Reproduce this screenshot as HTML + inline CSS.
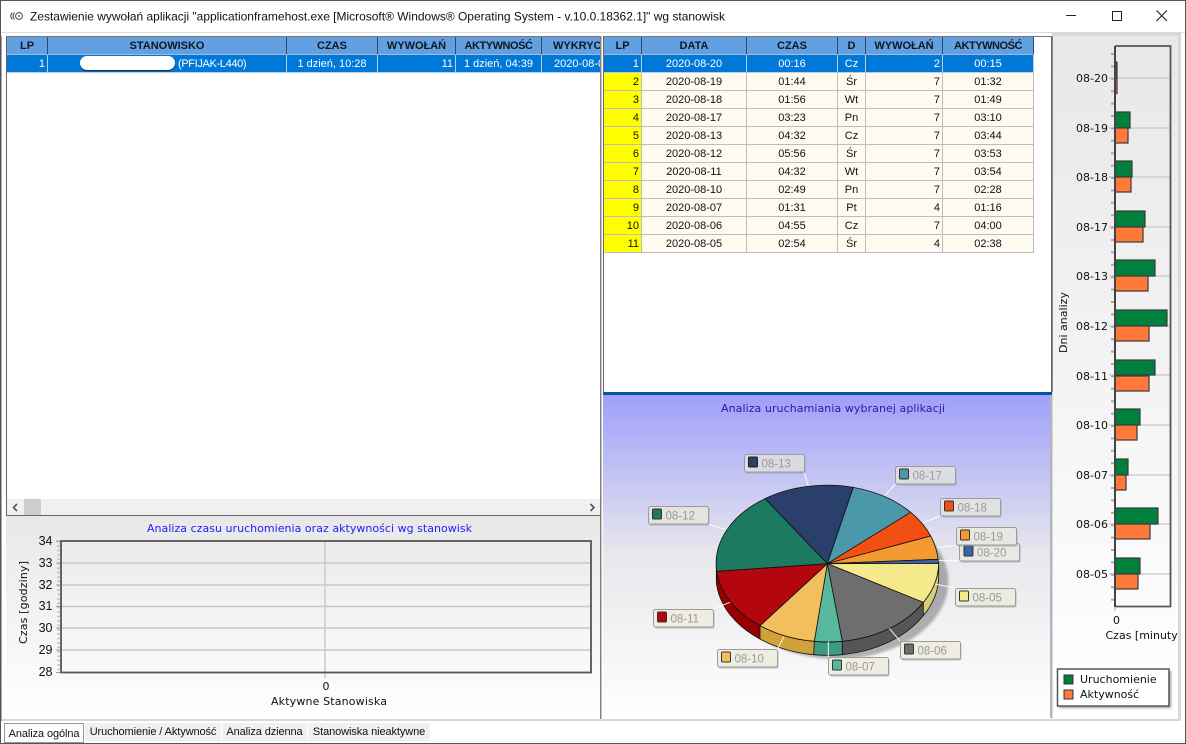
<!DOCTYPE html>
<html><head><meta charset="utf-8"><title>Zestawienie</title>
<style>
html,body{margin:0;padding:0;width:1186px;height:744px;overflow:hidden;background:#fff;font-family:"Liberation Sans",sans-serif}
svg.bg{position:absolute;left:0;top:0}
.t{position:absolute;overflow:hidden;background:#fff}
table{border-collapse:separate;border-spacing:0;table-layout:fixed;font:11px "Liberation Sans",sans-serif;color:#111}
td,th{padding:0 2px;box-sizing:border-box;border-right:1px solid #bdbdbd;border-bottom:1px solid #bdbdbd;text-align:center;white-space:nowrap;overflow:hidden;line-height:16px}
th{height:18px;background:#63a0e2;font-weight:bold;border-right:1px solid #2f4a6a;border-bottom:1px solid #9dbce0;color:#101820}
th.a{letter-spacing:-.45px}
td{height:18px;background:#fefaf0}
tr.s td{background:#0078d7;color:#fff;border-color:#b8cfe8}
td.y{background:#ffff00}
td.r{text-align:right}
.tab{position:absolute;font:11px "Liberation Sans",sans-serif;letter-spacing:-.1px;background:#f0f0f0;height:18px;line-height:18px;text-align:center;top:723px;color:#111;white-space:nowrap}
</style></head><body>
<svg class="bg" width="1186" height="744" viewBox="0 0 1186 744" xmlns="http://www.w3.org/2000/svg" font-family="'DejaVu Sans',sans-serif">
<defs>
<linearGradient id="g1" x1="0" y1="0" x2="0" y2="1"><stop offset="0" stop-color="#e8e8e8"/><stop offset="1" stop-color="#ffffff"/></linearGradient>
<linearGradient id="g2" x1="0" y1="0" x2="0" y2="1"><stop offset="0" stop-color="#9f9ffb"/><stop offset=".5" stop-color="#e8e8ec"/><stop offset="1" stop-color="#ffffff"/></linearGradient>
<filter id="bl" x="-20%" y="-20%" width="140%" height="140%"><feGaussianBlur stdDeviation="4"/></filter>
<filter id="sm" x="-20%" y="-20%" width="140%" height="140%"><feGaussianBlur stdDeviation="1.2"/></filter>
</defs>
<rect width="1186" height="744" fill="#fff"/>
<rect x="0" y="0" width="1186" height="1" fill="#555"/>
<rect x="0" y="0" width="1" height="744" fill="#555"/>
<rect x="1185" y="0" width="1" height="744" fill="#555"/>
<rect x="0" y="743" width="1186" height="1" fill="#555"/>
<rect x="1" y="32" width="1184" height="1" fill="#dcdcdc"/>
<rect x="1" y="719" width="1180" height="2" fill="#d8d8d8"/>
<rect x="1" y="36" width="1" height="685" fill="#a8a8a8"/>
<!-- app icon -->
<g fill="none" stroke="#555" stroke-width="1.1"><circle cx="19" cy="16" r="3.4"/><path d="M14.5 12.5 Q11.5 16 14.5 19.5M12.3 12.5 Q9.3 16 12.3 19.5"/></g>
<circle cx="19" cy="16" r="1" fill="#c33"/>
<text x="30" y="20.5" font-family="'Liberation Sans',sans-serif" font-size="12" fill="#111" textLength="695" lengthAdjust="spacingAndGlyphs">Zestawienie wywołań aplikacji "applicationframehost.exe [Microsoft® Windows® Operating System - v.10.0.18362.1]" wg stanowisk</text>
<!-- window buttons -->
<rect x="1066" y="15" width="10" height="1" fill="#222"/>
<rect x="1112.5" y="11.5" width="9" height="9" fill="none" stroke="#222"/>
<path d="M1156.5 10.5 L1167 21M1167 10.5 L1156.5 21" stroke="#222" stroke-width="1.1" fill="none"/>

<!-- panel frames -->
<rect x="6" y="36" width="1" height="480" fill="#666"/>
<rect x="6" y="36" width="594" height="1" fill="#777"/>
<rect x="600" y="36" width="1" height="683" fill="#808080"/>
<rect x="601" y="36" width="1" height="683" fill="#c4c4c4"/>
<rect x="603" y="36" width="1" height="356" fill="#666"/>
<rect x="1051" y="36" width="1.5" height="356" fill="#666"/>
<rect x="603" y="36" width="449" height="1" fill="#777"/>

<!-- scrollbar -->
<rect x="7" y="499" width="593" height="16" fill="#f0f0f0"/>
<rect x="24" y="499" width="17" height="16" fill="#cdcdcd"/>
<path d="M17 504 L13.5 507.5 L17 511M590.5 504 L594 507.5 L590.5 511" fill="none" stroke="#555" stroke-width="1.6"/>
<rect x="6" y="515" width="595" height="1" fill="#666"/>

<!-- lower-left chart -->
<rect x="6" y="516" width="594" height="203" fill="url(#g1)"/>
<text x="147" y="532" font-size="11" fill="#2020ff" textLength="325">Analiza czasu uruchomienia oraz aktywności wg stanowisk</text>
<g stroke="#c8c8c8" stroke-width="1.4"><path d="M61 563H591M61 585H591M61 606.5H591M61 628H591M61 650H591M325 541V678"/></g>
<rect x="61" y="541" width="530" height="131.5" fill="none" stroke="#555" stroke-width="1.8"/>
<line x1="58.5" y1="541" x2="58.5" y2="673" stroke="#bbb" stroke-width="2.5" stroke-dasharray="1.5 2.9"/>
<path d="M56 541H60M56 563H60M56 585H60M56 606.5H60M56 628H60M56 650H60M56 672.5H60" stroke="#999" stroke-width="1"/>
<g font-family="'Liberation Sans',sans-serif" font-size="12.5" fill="#111" text-anchor="end"><text x="52.5" y="545">34</text><text x="52.5" y="567">33</text><text x="52.5" y="589">32</text><text x="52.5" y="610">31</text><text x="52.5" y="632">30</text><text x="52.5" y="654">29</text><text x="52.5" y="676">28</text></g>
<text transform="translate(27 644) rotate(-90)" font-size="11" fill="#111" textLength="83">Czas [godziny]</text>
<text x="326" y="690" font-size="11" fill="#111" text-anchor="middle">0</text>
<text x="271" y="705" font-size="11" fill="#111" textLength="116">Aktywne Stanowiska</text>

<!-- pie panel -->
<rect x="603" y="392" width="449" height="3" fill="#0058a4"/>
<rect x="603" y="395" width="447" height="323" fill="url(#g2)"/>
<rect x="1050" y="395" width="2" height="323" fill="#b4b4c0"/>
<text x="721" y="412" font-size="11" fill="#2a1aa0" textLength="224">Analiza uruchamiania wybranej aplikacji</text>

<g transform="translate(640 440) scale(.33333)">
<ellipse cx="590" cy="425" rx="335" ry="232" fill="#000" opacity=".28" filter="url(#bl)"/>
<g stroke="#111" stroke-width="2.4" stroke-linejoin="round">
<path d="M229 371 A333 235 0 0 0 230 394 L230 434 A333 235 0 0 1 229 411Z" fill="#145a46"/>
<path d="M360 557 A333 235 0 0 1 230 394 L230 434 A333 235 0 0 0 360 597Z" fill="#980000"/>
<path d="M523 604 A333 235 0 0 1 360 557 L360 597 A333 235 0 0 0 523 644Z" fill="#d2a23a"/>
<path d="M607 604 A333 235 0 0 1 523 604 L521 644 A333 235 0 0 0 607 644Z" fill="#3e9a80"/>
<path d="M850 487 A333 235 0 0 1 607 604 L607 644 A333 235 0 0 0 850 527Z" fill="#555555"/>
<path d="M896 371 A333 235 0 0 1 850 487 L850 527 A333 235 0 0 0 896 411Z" fill="#d8ce78"/>
<path d="M562 371L375 176A333 235 0 0 1 640 142Z" fill="#2b3f6b"/>
<path d="M562 371L640 142A333 235 0 0 1 812 217Z" fill="#4a98aa"/>
<path d="M562 371L812 217A333 235 0 0 1 872 288Z" fill="#f34f12"/>
<path d="M562 371L872 288A333 235 0 0 1 894 358Z" fill="#f39a30"/>
<path d="M562 371L894 358A333 235 0 0 1 896 370Z" fill="#3a62ae"/>
<path d="M562 371L896 370A333 235 0 0 1 850 487Z" fill="#f4ea8c"/>
<path d="M562 371L850 487A333 235 0 0 1 607 604Z" fill="#6e6e6e"/>
<path d="M562 371L607 604A333 235 0 0 1 523 604Z" fill="#58b89e"/>
<path d="M562 371L523 604A333 235 0 0 1 360 557Z" fill="#f2bf5e"/>
<path d="M562 371L360 557A333 235 0 0 1 230 394Z" fill="#b4060e"/>
<path d="M562 371L230 394A333 235 0 0 1 375 176Z" fill="#1d7a60"/>
</g>
<path d="M492 96L505 138M766 132L735 167M900 228L850 248M948 316L892 323M957 362L896 362M945 444L885 432M780 603L748 565M565 651V605M412 628L432 590M219 507L270 487M204 252L255 268" stroke="#fff" stroke-width="3" fill="none" opacity=".9"/>
</g>

<!-- pie labels -->
<g font-family="'Liberation Sans',sans-serif" font-size="11.5" fill="#9a9a9a">
<g transform="translate(959.5 543.5)"><rect x="1" y="1" width="60" height="18" rx="2" fill="#888" opacity=".5"/><rect width="60" height="17.5" rx="2" fill="#e9e8e2" stroke="#9c9c9c"/><rect x="4.5" y="2.5" width="9" height="10" rx="1" fill="#3a62ae" stroke="#333"/><text x="17.5" y="13">08-20</text></g>
<g transform="translate(744.5 454.5)"><rect x="1" y="1" width="60" height="18" rx="2" fill="#888" opacity=".5"/><rect width="60" height="17.5" rx="2" fill="#dbdae2" stroke="#9c9c9c"/><rect x="4" y="2.5" width="9" height="10" rx="1" fill="#2b3f6b" stroke="#222"/><text x="17" y="13">08-13</text></g>
<g transform="translate(895.5 466.5)"><rect x="1" y="1" width="60" height="18" rx="2" fill="#888" opacity=".5"/><rect width="60" height="17.5" rx="2" fill="#dddce2" stroke="#9c9c9c"/><rect x="4" y="2.5" width="9" height="10" rx="1" fill="#4a98aa" stroke="#333"/><text x="17" y="13">08-17</text></g>
<g transform="translate(940.5 498.5)"><rect x="1" y="1" width="60" height="18" rx="2" fill="#888" opacity=".5"/><rect width="60" height="17.5" rx="2" fill="#e2e1e2" stroke="#9c9c9c"/><rect x="4" y="2.5" width="9" height="10" rx="1" fill="#f34f12" stroke="#333"/><text x="17" y="13">08-18</text></g>
<g transform="translate(648.5 506.5)"><rect x="1" y="1" width="60" height="18" rx="2" fill="#888" opacity=".5"/><rect width="60" height="17.5" rx="2" fill="#e4e3e0" stroke="#9c9c9c"/><rect x="4" y="2.5" width="9" height="10" rx="1" fill="#1d7a60" stroke="#333"/><text x="17" y="13">08-12</text></g>
<g transform="translate(956.5 527.5)"><rect x="1" y="1" width="60" height="18" rx="2" fill="#888" opacity=".5"/><rect width="60" height="17.5" rx="2" fill="#e7e6e2" stroke="#9c9c9c"/><rect x="4" y="2.5" width="9" height="10" rx="1" fill="#f39a30" stroke="#333"/><text x="17" y="13">08-19</text></g>
<g transform="translate(955.5 588.5)"><rect x="1" y="1" width="60" height="18" rx="2" fill="#888" opacity=".5"/><rect width="60" height="17.5" rx="2" fill="#ecebe0" stroke="#9c9c9c"/><rect x="4" y="2.5" width="9" height="10" rx="1" fill="#f4ea8c" stroke="#333"/><text x="17" y="13">08-05</text></g>
<g transform="translate(653.5 609.5)"><rect x="1" y="1" width="60" height="18" rx="2" fill="#888" opacity=".5"/><rect width="60" height="17.5" rx="2" fill="#eeeddf" stroke="#9c9c9c"/><rect x="4" y="2.5" width="9" height="10" rx="1" fill="#b4060e" stroke="#333"/><text x="17" y="13">08-11</text></g>
<g transform="translate(900.5 641.5)"><rect x="1" y="1" width="60" height="18" rx="2" fill="#888" opacity=".5"/><rect width="60" height="17.5" rx="2" fill="#eeeddf" stroke="#9c9c9c"/><rect x="4" y="2.5" width="9" height="10" rx="1" fill="#6e6e6e" stroke="#333"/><text x="17" y="13">08-06</text></g>
<g transform="translate(717.5 649.5)"><rect x="1" y="1" width="60" height="18" rx="2" fill="#888" opacity=".5"/><rect width="60" height="17.5" rx="2" fill="#eeeddf" stroke="#9c9c9c"/><rect x="4" y="2.5" width="9" height="10" rx="1" fill="#f2bf5e" stroke="#333"/><text x="17" y="13">08-10</text></g>
<g transform="translate(828.5 657.5)"><rect x="1" y="1" width="60" height="18" rx="2" fill="#888" opacity=".5"/><rect width="60" height="17.5" rx="2" fill="#eeeddf" stroke="#9c9c9c"/><rect x="4" y="2.5" width="9" height="10" rx="1" fill="#58b89e" stroke="#333"/><text x="17" y="13">08-07</text></g>
</g>

<!-- right bar chart -->
<rect x="1052" y="33" width="129" height="688" fill="#d8d8d8"/>
<rect x="1053" y="36" width="125" height="683" fill="url(#g1)"/>
<rect x="1052" y="36" width="1" height="356" fill="#888"/>
<g stroke="#c8c8c8" stroke-width="1.3"><path d="M1109 78H1170M1109 128H1170M1109 177H1170M1109 227H1170M1109 276H1170M1109 326H1170M1109 375H1170M1109 425H1170M1109 475H1170M1109 524H1170M1109 574H1170"/></g>
<line x1="1112.5" y1="53" x2="1112.5" y2="606" stroke="#aaa" stroke-width="3" stroke-dasharray="2 10.4"/>
<g stroke="#3a3a3a" stroke-width="1.2">
<rect x="1115" y="62" width="2" height="16" fill="#00803c"/><rect x="1115" y="78" width="2" height="15.5" fill="#ff7a3a"/>
<rect x="1115" y="112" width="15" height="16" fill="#00803c"/><rect x="1115" y="128" width="13" height="15" fill="#ff7a3a"/>
<rect x="1115" y="161" width="17" height="16" fill="#00803c"/><rect x="1115" y="177" width="16" height="15" fill="#ff7a3a"/>
<rect x="1115" y="211" width="30" height="16" fill="#00803c"/><rect x="1115" y="227" width="28" height="15" fill="#ff7a3a"/>
<rect x="1115" y="260" width="40" height="16" fill="#00803c"/><rect x="1115" y="276" width="33" height="15" fill="#ff7a3a"/>
<rect x="1115" y="310" width="52" height="16" fill="#00803c"/><rect x="1115" y="326" width="34" height="15" fill="#ff7a3a"/>
<rect x="1115" y="360" width="40" height="15" fill="#00803c"/><rect x="1115" y="376" width="34" height="15" fill="#ff7a3a"/>
<rect x="1115" y="409" width="25" height="16" fill="#00803c"/><rect x="1115" y="425" width="22" height="15" fill="#ff7a3a"/>
<rect x="1115" y="459" width="13" height="16" fill="#00803c"/><rect x="1115" y="475" width="11" height="15" fill="#ff7a3a"/>
<rect x="1115" y="508" width="43" height="16" fill="#00803c"/><rect x="1115" y="524" width="35" height="15" fill="#ff7a3a"/>
<rect x="1115" y="558" width="25" height="16" fill="#00803c"/><rect x="1115" y="574" width="23" height="15" fill="#ff7a3a"/>
</g>
<path d="M1115 46H1170.5V606.5H1115" fill="none" stroke="#555" stroke-width="1.8"/>
<rect x="1114" y="46" width="2" height="561" fill="#444"/>
<g font-size="11" fill="#111" text-anchor="end">
<text x="1108" y="82">08-20</text><text x="1108" y="132">08-19</text><text x="1108" y="181">08-18</text><text x="1108" y="231">08-17</text><text x="1108" y="280">08-13</text><text x="1108" y="330">08-12</text><text x="1108" y="380">08-11</text><text x="1108" y="429">08-10</text><text x="1108" y="479">08-07</text><text x="1108" y="528">08-06</text><text x="1108" y="578">08-05</text>
</g>
<text transform="translate(1067 353) rotate(-90)" font-size="11" fill="#111" textLength="61">Dni analizy</text>
<line x1="1115" y1="607" x2="1115" y2="611" stroke="#aaa"/>
<text x="1113" y="624" font-size="11" fill="#111">0</text>
<text x="1105.5" y="639" font-size="11" fill="#111">Czas [minuty</text>
<rect x="1179" y="620" width="2" height="30" fill="#d8d8d8"/>
<rect x="1181" y="620" width="4" height="30" fill="#fff"/>
<rect x="1059" y="671" width="112" height="37" fill="#777" opacity=".7" filter="url(#sm)"/>
<rect x="1057.5" y="669" width="111.5" height="37" fill="#fff" stroke="#555" stroke-width="1.5"/>
<rect x="1064" y="675" width="9" height="9" fill="#00803c" stroke="#333"/>
<rect x="1064" y="690" width="9" height="9" fill="#ff7a3a" stroke="#333"/>
<text x="1080" y="683" font-size="11" fill="#111">Uruchomienie</text>
<text x="1080" y="698" font-size="11" fill="#111">Aktywność</text>
<rect x="4.5" y="723.5" width="79" height="19" fill="#fff" stroke="#333" stroke-dasharray="1 1"/>
</svg>

<div class="t" style="left:7px;top:37px;width:593px;height:36px">
<table style="width:700px">
<colgroup><col style="width:41px"><col style="width:239px"><col style="width:91px"><col style="width:78px"><col style="width:86px"><col style="width:165px"></colgroup>
<tr><th>LP</th><th>STANOWISKO</th><th>CZAS</th><th>WYWOŁAŃ</th><th class="a">AKTYWNOŚĆ</th><th style="text-align:left;padding-left:11px">WYKRYCIE</th></tr>
<tr class="s"><td class="r">1</td><td style="text-align:left;padding-left:130px;letter-spacing:-.35px">(PFIJAK-L440)</td><td>1 dzień, 10:28</td><td class="r">11</td><td>1 dzień, 04:39</td><td style="text-align:left;padding-left:12px">2020-08-05</td></tr>
</table>
</div>
<div style="position:absolute;left:80px;top:56px;width:95px;height:14px;background:#fff;border-radius:7px;box-shadow:0 1px 1px #123"></div>

<div class="t" style="left:604px;top:37px;width:430px;height:216px">
<table style="width:430px">
<colgroup><col style="width:38px"><col style="width:105px"><col style="width:91px"><col style="width:28px"><col style="width:77px"><col style="width:91px"></colgroup>
<tr><th>LP</th><th>DATA</th><th>CZAS</th><th>D</th><th>WYWOŁAŃ</th><th class="a">AKTYWNOŚĆ</th></tr>
<tr class="s"><td class="r">1</td><td>2020-08-20</td><td>00:16</td><td>Cz</td><td class="r">2</td><td>00:15</td></tr>
<tr><td class="r y">2</td><td>2020-08-19</td><td>01:44</td><td>Śr</td><td class="r">7</td><td>01:32</td></tr>
<tr><td class="r y">3</td><td>2020-08-18</td><td>01:56</td><td>Wt</td><td class="r">7</td><td>01:49</td></tr>
<tr><td class="r y">4</td><td>2020-08-17</td><td>03:23</td><td>Pn</td><td class="r">7</td><td>03:10</td></tr>
<tr><td class="r y">5</td><td>2020-08-13</td><td>04:32</td><td>Cz</td><td class="r">7</td><td>03:44</td></tr>
<tr><td class="r y">6</td><td>2020-08-12</td><td>05:56</td><td>Śr</td><td class="r">7</td><td>03:53</td></tr>
<tr><td class="r y">7</td><td>2020-08-11</td><td>04:32</td><td>Wt</td><td class="r">7</td><td>03:54</td></tr>
<tr><td class="r y">8</td><td>2020-08-10</td><td>02:49</td><td>Pn</td><td class="r">7</td><td>02:28</td></tr>
<tr><td class="r y">9</td><td>2020-08-07</td><td>01:31</td><td>Pt</td><td class="r">4</td><td>01:16</td></tr>
<tr><td class="r y">10</td><td>2020-08-06</td><td>04:55</td><td>Cz</td><td class="r">7</td><td>04:00</td></tr>
<tr><td class="r y">11</td><td>2020-08-05</td><td>02:54</td><td>Śr</td><td class="r">4</td><td>02:38</td></tr>
</table>
</div>

<div class="tab" style="left:5px;width:78px;top:725px;background:transparent">Analiza ogólna</div>
<div class="tab" style="left:85px;width:136px">Uruchomienie / Aktywność</div>
<div class="tab" style="left:222px;width:85px">Analiza dzienna</div>
<div class="tab" style="left:308px;width:122px">Stanowiska nieaktywne</div>
</body></html>
